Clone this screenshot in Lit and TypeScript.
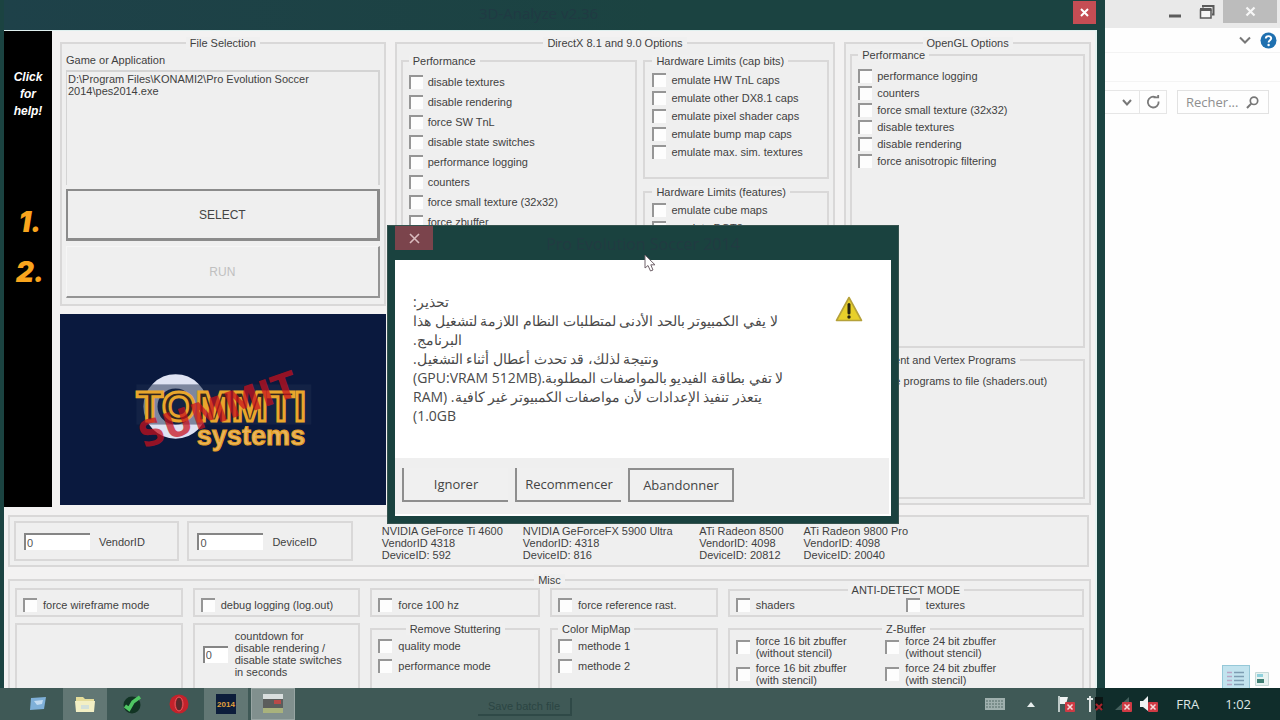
import { LitElement, html, css, svg } from "lit";
import { customElement } from "lit/decorators.js";

const uiFont = css`"Liberation Sans", Arial, sans-serif`;

const controls = css`
  * { box-sizing: border-box; }
  fieldset {
    margin: 0;
    padding: 0;
    min-width: 0;
    border: 2px solid #d9d8d8;
    background: #efefef;
  }
  legend {
    padding: 0 4px;
    margin-left: 0;
    line-height: 12px;
    background: #f0f0f0;
  }
  legend.mid { margin: 0 auto; }
  label.check {
    display: flex;
    align-items: center;
    gap: 5px;
    line-height: 12px;
  }
  label.check input {
    appearance: none;
    flex: none;
    width: 14px;
    height: 14px;
    margin: 0;
    background: #fdfdfd;
    border: 0 solid #969696;
    border-width: 2px 0 0 2px;
  }
  label.check input:checked { background: #7a7a7a; }
  input.num {
    flex: none;
    height: 17px;
    margin: 0;
    padding: 0 0 0 1px;
    border: 0 solid #858585;
    border-width: 2px 0 0 2px;
    border-radius: 0;
    background: #fff;
    color: #555;
    font: inherit;
  }
`;

const check = (text: string) =>
  html`<label class="check"><input type="checkbox" /><span>${text}</span></label>`;

@customElement("analyzer-window")
class AnalyzerWindow extends LitElement {
  static styles = [
    controls,
    css`
      :host {
        display: flex;
        flex-direction: column;
        background: #1b4341;
        padding: 0 8px 0 4px;
        font: 11px ${uiFont};
        color: #3f3f3f;
        min-width: 0;
      }
      .title {
        flex: none;
        height: 30px;
        display: flex;
        align-items: flex-start;
        background: linear-gradient(90deg, #1e4149, #1b4341 60%);
        font: 15px "Open Sans", "Noto Sans", sans-serif;
        color: #203a43;
      }
      .title span { flex: 1; text-align: center; line-height: 26px; }
      .close {
        width: 23px;
        height: 23px;
        margin: 1px 1px 0 0;
        padding: 0;
        border: 0;
        background: #c54d54;
        display: grid;
        place-items: center;
      }
      .body {
        flex: 1;
        display: flex;
        flex-direction: column;
        background: #f3f2f2;
        border-top: 1px solid #dff0ef;
        border-right: 2px solid #e4f3f1;
      }
      .top {
        flex: none;
        display: grid;
        grid-template-columns: 48px minmax(0, 1fr);
        column-gap: 8px;
        height: 476px;
      }
      .steps {
        background: #000;
        color: #fff;
        padding-top: 38px;
        text-align: center;
        font: italic bold 12px/17px "Liberation Sans", sans-serif;
      }
      .steps a { display: block; color: inherit; text-decoration: none; }
      .steps strong {
        display: block;
        padding-left: 4px;
        font: italic 900 28px/50px Inter, "DejaVu Sans", sans-serif;
        color: #f9a51d;
      }
      .steps .first { margin-top: 77px; }
      .panes {
        display: grid;
        grid-template-columns: 326fr 441fr 247fr;
        column-gap: 9px;
        padding: 6px 4px 2px 0;
      }
      .left { display: flex; flex-direction: column; gap: 8px; min-width: 0; }
      .file { display: flex; flex-direction: column; height: 269px; padding: 5px 4px 4px; }
      .file .inner { display: flex; flex-direction: column; height: 100%; }
      .path {
        height: 115px;
        margin: 4px 0;
        padding: 1px 0 0 1px;
        border: 0 solid #d4d4d4;
        border-width: 2px 2px 0 1px;
        line-height: 12px;
      }
      .path span { display: block; max-width: 260px; }
      .big {
        height: 52px;
        margin: 0;
        padding: 0;
        background: #efefef;
        font: 12px ${uiFont};
        color: #444;
        border: 2px solid #8b8b8b;
        border-width: 2px 3px 3px 2px;
      }
      .big.off {
        margin-top: 5px;
        color: #c0c0c0;
        border-color: #f6f6f6 #949494 #949494 #f6f6f6;
        border-width: 1px 2px 2px 1px;
      }
      .logo { flex: 1; background: #0a193e; display: block; width: 100%; min-height: 0; }
      .dx { padding: 6px 4px 4px; }
      .dxgrid { display: grid; grid-template-columns: 237fr 186fr; column-gap: 6px; }
      .stack { display: flex; flex-direction: column; }
      .perf { padding: 8px 6px 0; height: 420px; }
      .perf .stack { gap: 6px; }
      .cap { padding: 6px 7px 0; height: 124px; }
      .cap .stack { gap: 4px; }
      .capcol { display: flex; flex-direction: column; gap: 7px; }
      .feat { height: 284px; padding: 5px 7px 0; }
      .feat .stack { gap: 4px; }
      .gl { padding: 0 4px 4px; }
      .glcol { display: flex; flex-direction: column; gap: 6px; }
      .glperf { height: 299px; padding: 8px 6px; }
      .glperf .stack { gap: 3px; }
      .glprog { height: 145px; padding: 8px 6px; }
      .ids {
        flex: none;
        margin: 8px 6px 0 4px;
        padding: 4px;
      }
      .idrow {
        display: grid;
        grid-template-columns: 168fr 168fr 134fr 171fr 93fr 296fr;
        column-gap: 8px;
      }
      .idbox > div { display: flex; align-items: center; gap: 9px; padding: 10px 8px 9px; }
      .idbox input.num { width: 66px; }
      .card { line-height: 12px; padding: 4px 0 0 21px; white-space: nowrap; }
      .card + .card { padding-left: 12px; }
      .misc { flex: none; margin: 7px 4px 0 4px; height: 150px; padding: 0 5px; }
      .misc .check { gap: 6px; }
      .miscgrid {
        display: grid;
        grid-template-columns: 168fr 168fr 170fr 168fr 357fr;
        column-gap: 10px;
        row-gap: 6px;
      }
      .plain { margin-top: 2px; padding: 8px 6px 3px; height: 29px; }
      .anti { height: 33px; margin-top: -2px; }
      .anti .two { padding: 2px 6px 0; }
      .two { display: grid; grid-template-columns: 170fr 170fr; }
      .sub { height: 90px; padding: 4px 6px; }
      .sub .stack { gap: 6px; }
      .z { padding-top: 0; }
      .z .two { grid-template-columns: 149fr 190fr; row-gap: 3px; }
      .z .check { white-space: pre-line; align-items: center; }
      .box { height: 84px; margin-top: 0; padding: 4px 5px; }
      .count { display: flex; align-items: center; gap: 7px; line-height: 12px; padding: 1px 3px; }
      .count input.num { width: 25px; }
    `,
  ];

  render() {
    return html`
      <div class="title">
        <span>3D-Analyze v2.36</span>
        <button class="close" aria-label="Close">
          <svg width="9" height="9" viewBox="0 0 9 9"><path d="M1 1L8 8M8 1L1 8" stroke="#fff" stroke-width="2" /></svg>
        </button>
      </div>
      <div class="body">
        <div class="top">
          <nav class="steps">
            <a href="#help">Click<br />for<br />help!</a>
            <strong class="first">1.</strong>
            <strong>2.</strong>
          </nav>
          <div class="panes">
            <div class="left">
              <fieldset class="file">
                <legend class="mid">File Selection</legend>
                <div class="inner">
                  <div>Game or Application</div>
                  <div class="path"><span>D:\\Program Files\\KONAMI2\\Pro Evolution Soccer 2014\\pes2014.exe</span></div>
                  <button class="big">SELECT</button>
                  <button class="big off" disabled>RUN</button>
                </div>
              </fieldset>
              ${this.logo()}
            </div>
            <fieldset class="dx">
              <legend class="mid">DirectX 8.1 and 9.0 Options</legend>
              <div class="dxgrid">
                <fieldset class="perf">
                  <legend>Performance</legend>
                  <div class="stack">
                    ${["disable textures", "disable rendering", "force SW TnL", "disable state switches",
                      "performance logging", "counters", "force small texture (32x32)", "force zbuffer"].map(check)}
                  </div>
                </fieldset>
                <div class="capcol">
                  <fieldset class="cap">
                    <legend>Hardware Limits (cap bits)</legend>
                    <div class="stack">
                      ${["emulate HW TnL caps", "emulate other DX8.1 caps", "emulate pixel shader caps",
                        "emulate bump map caps", "emulate max. sim. textures"].map(check)}
                    </div>
                  </fieldset>
                  <fieldset class="feat">
                    <legend>Hardware Limits (features)</legend>
                    <div class="stack">${["emulate cube maps", "emulate DOT3"].map(check)}</div>
                  </fieldset>
                </div>
              </div>
            </fieldset>
            <fieldset class="gl">
              <legend class="mid">OpenGL Options</legend>
              <div class="glcol">
                <fieldset class="glperf">
                  <legend>Performance</legend>
                  <div class="stack">
                    ${["performance logging", "counters", "force small texture (32x32)", "disable textures",
                      "disable rendering", "force anisotropic filtering"].map(check)}
                  </div>
                </fieldset>
                <fieldset class="glprog">
                  <legend>Fragment and Vertex Programs</legend>
                  ${check("save programs to file (shaders.out)")}
                </fieldset>
              </div>
            </fieldset>
          </div>
        </div>
        <fieldset class="ids">
          <div class="idrow">
            <fieldset class="idbox"><div><input class="num" id="vendor" value="0" /><label for="vendor">VendorID</label></div></fieldset>
            <fieldset class="idbox"><div><input class="num" id="device" value="0" /><label for="device">DeviceID</label></div></fieldset>
            ${[
              ["NVIDIA GeForce Ti 4600", "VendorID 4318", "DeviceID: 592"],
              ["NVIDIA GeForceFX 5900 Ultra", "VendorID: 4318", "DeviceID: 816"],
              ["ATi Radeon 8500", "VendorID: 4098", "DeviceID: 20812"],
              ["ATi Radeon 9800 Pro", "VendorID: 4098", "DeviceID: 20040"],
            ].map((c) => html`<div class="card">${c.map((l) => html`<div>${l}</div>`)}</div>`)}
          </div>
        </fieldset>
        <fieldset class="misc">
          <legend class="mid">Misc</legend>
          <div class="miscgrid">
            <fieldset class="plain">${check("force wireframe mode")}</fieldset>
            <fieldset class="plain">${check("debug logging (log.out)")}</fieldset>
            <fieldset class="plain">${check("force 100 hz")}</fieldset>
            <fieldset class="plain">${check("force reference rast.")}</fieldset>
            <fieldset class="anti">
              <legend class="mid">ANTI-DETECT MODE</legend>
              <div class="two">${["shaders", "textures"].map(check)}</div>
            </fieldset>
            <fieldset class="box"></fieldset>
            <fieldset class="box">
              <div class="count">
                <input class="num" id="count" value="0" />
                <label for="count">countdown for<br />disable rendering /<br />disable state switches<br />in seconds</label>
              </div>
            </fieldset>
            <fieldset class="sub">
              <legend class="mid">Remove Stuttering</legend>
              <div class="stack">${["quality mode", "performance mode"].map(check)}</div>
            </fieldset>
            <fieldset class="sub">
              <legend>Color MipMap</legend>
              <div class="stack">${["methode 1", "methode 2"].map(check)}</div>
            </fieldset>
            <fieldset class="sub z">
              <legend class="mid">Z-Buffer</legend>
              <div class="two">
                ${["force 16 bit zbuffer\n(without stencil)", "force 24 bit zbuffer\n(without stencil)",
                  "force 16 bit zbuffer\n(with stencil)", "force 24 bit zbuffer\n(with stencil)"].map(check)}
              </div>
            </fieldset>
          </div>
        </fieldset>
      </div>
    `;
  }

  logo() {
    return html`<svg class="logo" viewBox="0 0 324 190" role="img" aria-label="Tommti Systems">
      <circle cx="115" cy="92" r="25" fill="none" stroke="#dfe3f3" stroke-width="14" />
      <rect x="76" y="70" width="174" height="40" fill="#1b2b4c" opacity="0.5" />
      <g font-weight="bold">
        <text x="76" y="106" font-family="Liberation Sans, Arial, sans-serif" font-size="43" fill="#33261f" stroke="#e9a62c" stroke-width="3">TOMMTI</text>
        <text x="136" y="130" font-family="Liberation Sans, Arial, sans-serif" font-size="27" fill="#e9b45c" stroke="#e59f22" stroke-width="1">systems</text>
        <text transform="translate(83 134) rotate(-19)" font-family="DejaVu Sans, sans-serif" font-size="36" fill="#c8101c" opacity="0.72">SUMMIT</text>
      </g>
    </svg>`;
  }
}

@customElement("warning-dialog")
class WarningDialog extends LitElement {
  static styles = css`
    * { box-sizing: border-box; }
    :host {
      display: block;
      padding: 0 7px 7px;
      background: #1a423f;
      border: 1px solid #36534f;
      font: 14px "Open Sans", "Noto Sans", sans-serif;
      color: #4a4a4a;
    }
    header { display: flex; height: 34px; padding-right: 38px; color: #213b42; line-height: 36px; font-size: 16px; }
    header span { flex: 1; text-align: center; }
    .close {
      width: 38px;
      height: 24px;
      padding: 0;
      border: 0;
      background: #7b444c;
      display: grid;
      place-items: center;
    }
    .msg {
      display: flex;
      justify-content: space-between;
      height: 198px;
      padding: 32px 28px 0 18px;
      background: #fff;
    }
    .lines { margin: 0; line-height: 19px; }
    .lines span { display: block; direction: rtl; text-align: left; white-space: nowrap; }
    .msg svg { flex: none; margin-top: 4px; }
    footer {
      display: flex;
      gap: 7px;
      padding: 10px 7px 12px;
      background: #efefef;
      border: 0 solid #fff;
      border-width: 0 2px 2px 0;
    }
    footer button {
      width: 106px;
      height: 34px;
      padding: 0;
      background: #f0f0f0;
      font: inherit;
      font-size: 13px;
      color: #444;
      border: 0 solid #8e8e8e;
      border-width: 0 0 2px 2px;
    }
    footer button.main { border-width: 2px; }
  `;

  render() {
    return html`
      <header>
        <button class="close" aria-label="Close">
          <svg width="11" height="11" viewBox="0 0 11 11"><path d="M1 1L10 10M10 1L1 10" stroke="#d9bcbf" stroke-width="1.6" /></svg>
        </button>
        <span>Pro Evolution Soccer 2014</span>
      </header>
      <div class="msg">
        <p class="lines">
          ${[
            "تحذير:",
            "لا يفي الكمبيوتر بالحد الأدنى لمتطلبات النظام اللازمة لتشغيل هذا",
            "البرنامج.",
            "ونتيجة لذلك، قد تحدث أعطال أثناء التشغيل.",
            "لا تفي بطاقة الفيديو بالمواصفات المطلوبة.(GPU:VRAM 512MB)",
            "يتعذر تنفيذ الإعدادات لأن مواصفات الكمبيوتر غير كافية. (RAM",
            "1.0GB)",
          ].map((l) => html`<span>${l}</span>`)}
        </p>
        <svg width="28" height="26" viewBox="0 0 28 26">
          <path d="M14 1.5L26.5 24.5H1.5Z" fill="#e8d02a" stroke="#b5a13a" stroke-width="1.6" stroke-linejoin="round" />
          <path d="M14 8.5V17" stroke="#262310" stroke-width="3" stroke-linecap="round" />
          <circle cx="14" cy="21" r="1.7" fill="#262310" />
        </svg>
      </div>
      <footer>
        <button>Ignorer</button>
        <button>Recommencer</button>
        <button class="main">Abandonner</button>
      </footer>
    `;
  }
}

@customElement("explorer-window")
class ExplorerWindow extends LitElement {
  static styles = css`
    * { box-sizing: border-box; }
    :host {
      display: flex;
      flex-direction: column;
      background: #fefefe;
      font: 13px "Open Sans", "Noto Sans", sans-serif;
      color: #8a8a8a;
      min-width: 0;
    }
    button { border: 0; padding: 0; background: none; display: grid; place-items: center; }
    .caption { display: flex; justify-content: flex-end; height: 28px; background: #e9e9e9; padding-right: 3px; }
    .caption button { width: 32px; height: 23px; }
    .caption .close { width: 54px; background: #bcbcbc; }
    .ribbon { display: flex; justify-content: flex-end; align-items: center; gap: 9px; height: 25px; padding-right: 3px; border-bottom: 1px solid #f3f3f3; }
    .band { height: 29px; border-bottom: 1px solid #f4f4f4; }
    .address { display: flex; padding-top: 8px; height: 40px; }
    .address button { width: 28px; height: 24px; border: 1px solid #e6e6e6; }
    .address .drop { width: 34px; border-left: 0; padding-left: 10px; border-right: 0; }
    .search {
      display: flex;
      align-items: center;
      width: 92px;
      height: 24px;
      margin-left: 10px;
      padding: 0 9px 0 8px;
      border: 1px solid #e2e2e2;
    }
    .search input { width: 100%; min-width: 0; border: 0; padding: 0; background: none; font: inherit; color: #8f8f8f; }
    .search input::placeholder { color: #8f8f8f; }
    .search svg { flex: none; }
    .views { display: flex; align-items: center; justify-content: flex-end; margin-top: auto; padding: 0 11px 32px 0; gap: 5px; }
    .views .on { width: 28px; height: 27px; background: #c2e3ee; border: 1px solid #95c8d8; }
  `;

  render() {
    return html`
      <div class="caption">
        <button aria-label="Minimize"><svg width="14" height="18"><path d="M1 13H13" stroke="#5c5c5c" stroke-width="3" /></svg></button>
        <button aria-label="Restore">
          <svg width="16" height="16" viewBox="0 0 16 16" fill="none" stroke="#5a5a5a">
            <path d="M4 3.5V2H14.5V10.5H13" stroke-width="2" /><path d="M1.5 6H12V14H1.5Z" fill="#f5f5f5" stroke-width="1.5" /><path d="M1 5.5H12.5" stroke-width="3" />
          </svg>
        </button>
        <button class="close" aria-label="Close"><svg width="11" height="11"><path d="M1.5 1.5L9.5 9.5M9.5 1.5L1.5 9.5" stroke="#f6f6f6" stroke-width="2.2" /></svg></button>
      </div>
      <div class="ribbon">
        <button aria-label="Expand ribbon"><svg width="12" height="8"><path d="M1 1.5L6 6.5L11 1.5" fill="none" stroke="#777" stroke-width="2" /></svg></button>
        <button aria-label="Help">
          <svg width="17" height="17" viewBox="0 0 17 17">
            <circle cx="8.5" cy="8.5" r="8" fill="#1f70b0" />
            <path d="M5.8 6.6C5.8 3.2 11.3 3.4 11.2 6.4C11.1 8.3 8.6 8.2 8.6 10.4" fill="none" stroke="#fff" stroke-width="1.9" />
            <circle cx="8.6" cy="13" r="1.2" fill="#fff" />
          </svg>
        </button>
      </div>
      <div class="band"></div>
      <div class="address">
        <button class="drop" aria-label="Previous locations"><svg width="10" height="7"><path d="M1 1L5 5.5L9 1" fill="none" stroke="#777" stroke-width="2" /></svg></button>
        <button aria-label="Refresh">
          <svg width="15" height="16" viewBox="0 0 15 16"><path d="M9.5 3.2A5.4 5.4 0 1 0 12.6 7.5" fill="none" stroke="#7a7a7a" stroke-width="1.8" /><path d="M7.5 3.4H12.2V1" fill="none" stroke="#7a7a7a" stroke-width="1.8" /></svg>
        </button>
        <label class="search">
          <input type="text" placeholder="Recher..." aria-label="Rechercher" />
          <svg width="13" height="13" viewBox="0 0 13 13"><circle cx="8" cy="4.8" r="3.7" fill="none" stroke="#777" stroke-width="1.7" /><path d="M5.2 7.6L1 12" stroke="#777" stroke-width="2" /></svg>
        </label>
      </div>
      <div class="views">
        <button class="on" aria-label="Details">
          <svg width="18" height="17" viewBox="0 0 18 17"><path d="M0 2.5H5M0 6.5H5M0 10.5H5M0 14.5H5" stroke="#b9a5c4" stroke-width="1.3" /><path d="M7 2.5H17M7 6.5H17M7 10.5H17M7 14.5H17" stroke="#7d9db2" stroke-width="1.3" /></svg>
        </button>
        <button aria-label="Large icons">
          <svg width="14" height="14" viewBox="0 0 14 14"><path d="M.5 .5H13.5V13.5H.5Z" fill="#e8f3f1" stroke="#c5d9d8" /><rect x="2" y="2" width="6" height="3" fill="#8fd0dc" /><rect x="2" y="7" width="7" height="4" fill="#3f7f73" /></svg>
        </button>
      </div>
    `;
  }
}

const redX = svg`<rect x="8" y="7" width="10" height="10" rx="1" fill="#cf3a44" /><path d="M10.5 9.5L15.5 14.5M15.5 9.5L10.5 14.5" stroke="#f5dcdc" stroke-width="1.5" />`;

@customElement("task-bar")
class TaskBar extends LitElement {
  static styles = css`
    * { box-sizing: border-box; }
    :host {
      display: grid;
      grid-template-columns: minmax(0, 1fr) 184px;
      height: 32px;
      font: 13px "Open Sans", "Noto Sans", sans-serif;
      color: #dfe6e5;
    }
    svg { flex: none; }
    button { border: 0; padding: 0; background: none; display: grid; place-items: center; color: inherit; font: inherit; }
    .apps { display: flex; align-items: stretch; background: #3f5956; padding-left: 16px; gap: 3px; }
    .apps button { width: 44px; }
    .apps .open { background: #627774; }
    .apps .active { background: #81908e; border: 1px solid #98a5a3; }
    .apps .ghost {
      width: 94px;
      height: 18px;
      margin: 10px 0 0 180px;
      border: 0 solid #2f4947;
      border-width: 0 2px 2px 0;
      color: #2b4543;
      font: 11px "Liberation Sans", sans-serif;
    }
    .low { margin: 0 -8px 0 auto; display: flex; align-items: center; gap: 22px; z-index: 1; }
    .pair { display: flex; gap: 11px; }
    .tray { display: flex; align-items: center; background: #102d2b; padding-right: 29px; justify-content: flex-end; gap: 8px; }
    .lang { margin: 0 18px 0 10px; }
  `;

  render() {
    return html`
      <div class="apps">
        <button aria-label="Show desktop"><svg width="18" height="16" viewBox="0 0 18 16"><path d="M2 2L17 1L15 13L1 14Z" fill="#7fb0d8" /><path d="M5 5L14 4L13 8L8 9Z" fill="#c3dcf1" /></svg></button>
        <button class="open" aria-label="Files"><svg width="20" height="18" viewBox="0 0 20 18"><path d="M1 2H8L10 4H19V16H1Z" fill="#e5dc9a" /><path d="M0 6H20L19 17H1Z" fill="#f3efc4" /><rect x="6" y="10" width="8" height="4" fill="#d3e0da" /></svg></button>
        <button aria-label="Antivirus"><svg width="20" height="20" viewBox="0 0 20 20"><circle cx="10" cy="11" r="8.5" fill="#123424" /><path d="M3 12L7 15L11 8L18 3" fill="none" stroke="#4fc763" stroke-width="3.6" /></svg></button>
        <button aria-label="Browser"><svg width="20" height="20" viewBox="0 0 20 20"><circle cx="10" cy="10" r="9.5" fill="#c4222b" /><ellipse cx="10" cy="10" rx="3" ry="6.5" fill="#5a2a2c" /><ellipse cx="10" cy="10" rx="4" ry="7" fill="none" stroke="#e05a5f" /></svg></button>
        <button class="open" aria-label="Game"><svg width="20" height="20" viewBox="0 0 20 20"><rect width="20" height="20" fill="#0c1d3b" /><text x="10" y="13" text-anchor="middle" font-size="8" font-weight="bold" font-family="Liberation Sans" fill="#e2a13c">2014</text></svg></button>
        <button class="active" aria-label="Analyzer"><svg width="20" height="20" viewBox="0 0 20 20"><rect y="0" width="20" height="5" fill="#d9dede" /><rect y="5" width="20" height="9" fill="#5b5d5c" /><rect x="11" y="6" width="7" height="4" fill="#b94a48" /><rect y="14" width="20" height="5" fill="#a9b27c" /></svg></button>
        <button class="ghost">Save batch file</button>
        <div class="low">
          <svg width="20" height="12" viewBox="0 0 20 12"><rect width="20" height="12" fill="#9fb0ae" /><path d="M1 3H19M1 6H19M1 9H19" stroke="#546c69" stroke-dasharray="2 1" /></svg>
          <svg width="8" height="5" viewBox="0 0 8 5"><path d="M0 5L4 0L8 5Z" fill="#e8eeed" /></svg>
          <div class="pair">
            <svg width="18" height="18" viewBox="0 0 18 18"><path d="M2 1V17" stroke="#dfe6e5" stroke-width="1.6" /><path d="M3 2H11L9 9H3Z" fill="#f0f3f3" />${redX}</svg>
            <svg width="18" height="18" viewBox="0 0 18 18"><path d="M4 1V17M1 4H7" stroke="#dfe6e5" stroke-width="2" /><rect x="9" y="2" width="8" height="12" fill="#0b1615" /><path d="M10 9L16 15M16 9L10 15" stroke="#a8242c" stroke-width="2" /></svg>
          </div>
        </div>
      </div>
      <div class="tray">
        <svg width="18" height="18" viewBox="0 0 18 18"><path d="M1 15L15 2V15Z" fill="#45605d" />${redX}</svg>
        <svg width="18" height="18" viewBox="0 0 18 18"><path d="M0 6H3L8 1V16L3 12H0Z" fill="#eef2f2" />${redX}</svg>
        <span class="lang">FRA</span>
        <time>1:02</time>
      </div>
    `;
  }
}

@customElement("app-root")
class AppRoot extends LitElement {
  static styles = css`
    :host { display: block; position: relative; height: 100vh; overflow: hidden; background: #1b4341; }
    .desk { display: grid; grid-template-columns: minmax(0, 1fr) 175px; height: 100%; }
    warning-dialog { position: absolute; left: 387px; top: 225px; width: 512px; box-sizing: border-box; }
    .pointer { position: absolute; left: 644px; top: 254px; }
    task-bar { position: absolute; left: 0; right: 0; bottom: 0; }
    @media (min-width: 0) { .low { position: relative; } }
  `;

  render() {
    return html`
      <div class="desk">
        <analyzer-window></analyzer-window>
        <explorer-window></explorer-window>
      </div>
      <warning-dialog></warning-dialog>
      <task-bar></task-bar>
      <svg class="pointer" width="12" height="18" viewBox="0 0 12 18"><path d="M1 1V14L4 11.5L6.5 17L9 16L6.8 10.8H11Z" fill="#fff" stroke="#70626a" /></svg>
    `;
  }
}
